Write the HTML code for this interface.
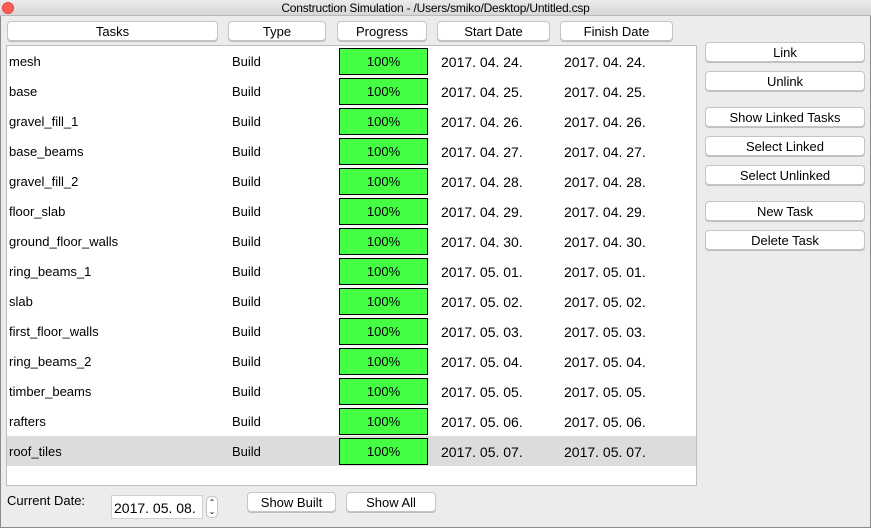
<!DOCTYPE html>
<html><head><meta charset="utf-8"><style>
*{margin:0;padding:0;box-sizing:border-box}
body{width:871px;height:528px;background:#ececec;font-family:"Liberation Sans",sans-serif;font-size:13px;color:#000;position:relative;overflow:hidden}
.win{position:absolute;left:0;top:0;width:871px;height:528px;border:1px solid #8a8a8a;border-top:none}
.title{position:absolute;left:0;top:0;width:871px;height:16px;background:linear-gradient(#ebebeb,#d6d6d6);border-bottom:1px solid #b9b9b9;text-align:center;font-size:12px;line-height:16px;letter-spacing:-0.2px}
.dot{position:absolute;left:2px;top:2px;width:12px;height:12px;border-radius:50%;background:#fc5b57;border:1px solid #e2463f}
.btn{position:absolute;height:20px;background:#fff;border:1px solid #c5c5c5;border-radius:4px;text-align:center;line-height:19px;font-size:13px;box-shadow:0 1px 0 #bdbdbd}
.table{position:absolute;left:6px;top:45px;width:691px;height:441px;background:#fff;border:1px solid #bdbdbd}
.row{position:absolute;left:0;width:689px;height:30px;line-height:32px}
.row span{position:absolute}
.row span.d{font-size:14px}
.sel{background:#dcdcdc}
.prog{position:absolute;left:332px;top:2px;width:89px;height:27px;background:#44ff44;border:1px solid #000;text-align:center;line-height:26px}
</style></head><body>
<div class="win"></div>
<div class="title"><div class="dot"></div>Construction Simulation - /Users/smiko/Desktop/Untitled.csp</div>
<div class="btn" style="left:7px;top:21px;width:211px">Tasks</div>
<div class="btn" style="left:228px;top:21px;width:98px">Type</div>
<div class="btn" style="left:337px;top:21px;width:90px">Progress</div>
<div class="btn" style="left:437px;top:21px;width:113px">Start Date</div>
<div class="btn" style="left:560px;top:21px;width:113px">Finish Date</div>
<div class="table">
<div class="row" style="top:0"><span style="left:2px">mesh</span><span style="left:225px">Build</span><div class="prog">100%</div><span class="d" style="left:434px">2017. 04. 24.</span><span class="d" style="left:557px">2017. 04. 24.</span></div>
<div class="row" style="top:30px"><span style="left:2px">base</span><span style="left:225px">Build</span><div class="prog">100%</div><span class="d" style="left:434px">2017. 04. 25.</span><span class="d" style="left:557px">2017. 04. 25.</span></div>
<div class="row" style="top:60px"><span style="left:2px">gravel_fill_1</span><span style="left:225px">Build</span><div class="prog">100%</div><span class="d" style="left:434px">2017. 04. 26.</span><span class="d" style="left:557px">2017. 04. 26.</span></div>
<div class="row" style="top:90px"><span style="left:2px">base_beams</span><span style="left:225px">Build</span><div class="prog">100%</div><span class="d" style="left:434px">2017. 04. 27.</span><span class="d" style="left:557px">2017. 04. 27.</span></div>
<div class="row" style="top:120px"><span style="left:2px">gravel_fill_2</span><span style="left:225px">Build</span><div class="prog">100%</div><span class="d" style="left:434px">2017. 04. 28.</span><span class="d" style="left:557px">2017. 04. 28.</span></div>
<div class="row" style="top:150px"><span style="left:2px">floor_slab</span><span style="left:225px">Build</span><div class="prog">100%</div><span class="d" style="left:434px">2017. 04. 29.</span><span class="d" style="left:557px">2017. 04. 29.</span></div>
<div class="row" style="top:180px"><span style="left:2px">ground_floor_walls</span><span style="left:225px">Build</span><div class="prog">100%</div><span class="d" style="left:434px">2017. 04. 30.</span><span class="d" style="left:557px">2017. 04. 30.</span></div>
<div class="row" style="top:210px"><span style="left:2px">ring_beams_1</span><span style="left:225px">Build</span><div class="prog">100%</div><span class="d" style="left:434px">2017. 05. 01.</span><span class="d" style="left:557px">2017. 05. 01.</span></div>
<div class="row" style="top:240px"><span style="left:2px">slab</span><span style="left:225px">Build</span><div class="prog">100%</div><span class="d" style="left:434px">2017. 05. 02.</span><span class="d" style="left:557px">2017. 05. 02.</span></div>
<div class="row" style="top:270px"><span style="left:2px">first_floor_walls</span><span style="left:225px">Build</span><div class="prog">100%</div><span class="d" style="left:434px">2017. 05. 03.</span><span class="d" style="left:557px">2017. 05. 03.</span></div>
<div class="row" style="top:300px"><span style="left:2px">ring_beams_2</span><span style="left:225px">Build</span><div class="prog">100%</div><span class="d" style="left:434px">2017. 05. 04.</span><span class="d" style="left:557px">2017. 05. 04.</span></div>
<div class="row" style="top:330px"><span style="left:2px">timber_beams</span><span style="left:225px">Build</span><div class="prog">100%</div><span class="d" style="left:434px">2017. 05. 05.</span><span class="d" style="left:557px">2017. 05. 05.</span></div>
<div class="row" style="top:360px"><span style="left:2px">rafters</span><span style="left:225px">Build</span><div class="prog">100%</div><span class="d" style="left:434px">2017. 05. 06.</span><span class="d" style="left:557px">2017. 05. 06.</span></div>
<div class="row sel" style="top:390px"><span style="left:2px">roof_tiles</span><span style="left:225px">Build</span><div class="prog">100%</div><span class="d" style="left:434px">2017. 05. 07.</span><span class="d" style="left:557px">2017. 05. 07.</span></div>
</div>
<div class="btn" style="left:705px;top:42px;width:160px">Link</div>
<div class="btn" style="left:705px;top:71px;width:160px">Unlink</div>
<div class="btn" style="left:705px;top:107px;width:160px">Show Linked Tasks</div>
<div class="btn" style="left:705px;top:136px;width:160px">Select Linked</div>
<div class="btn" style="left:705px;top:165px;width:160px">Select Unlinked</div>
<div class="btn" style="left:705px;top:201px;width:160px">New Task</div>
<div class="btn" style="left:705px;top:230px;width:160px">Delete Task</div>
<div style="position:absolute;left:7px;top:493px">Current Date:</div>
<div style="position:absolute;left:111px;top:495px;width:92px;height:24px;background:#fff;border:1px solid #d0d0d0;line-height:24px;padding-left:2px;font-size:14px">2017. 05. 08.</div>
<div style="position:absolute;left:206px;top:496px;width:12px;height:22px;background:#fff;border:1px solid #c5c5c5;border-radius:5px;font-size:8px;line-height:9px;text-align:center;padding-top:1px">&#8963;<br>&#8964;</div>
<div class="btn" style="left:247px;top:492px;width:89px">Show Built</div>
<div class="btn" style="left:346px;top:492px;width:90px">Show All</div>
</body></html>
